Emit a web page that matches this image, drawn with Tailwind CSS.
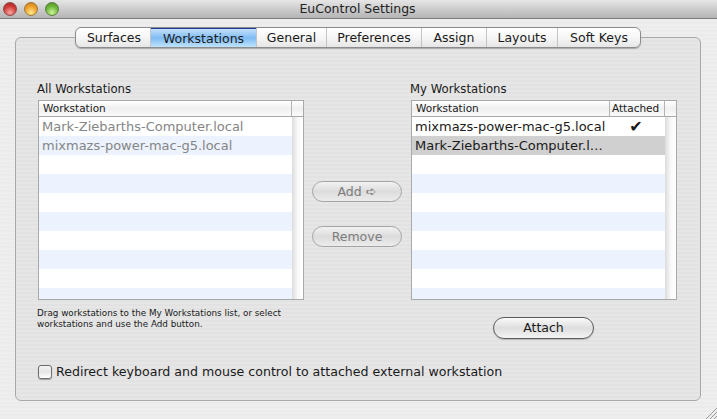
<!DOCTYPE html>
<html lang="en">
<head>
  <meta charset="UTF-8" />
  <title>EuControl Settings</title>
  <script src="https://cdn.jsdelivr.net/npm/@tailwindcss/browser@4"></script>
</head>
<body class="w-[717px] h-[419px] overflow-hidden font-['DejaVu_Sans',sans-serif] text-[#1a1a1a] bg-[repeating-linear-gradient(180deg,#eeeeee_0px,#eeeeee_2px,#ebebeb_2px,#ebebeb_4px)]">
  <!-- title bar -->
  <header class="relative h-[19px] flex items-center justify-center border-b border-[#7d7d7d] bg-gradient-to-b from-[#e6e6e6] to-[#b4b4b4]">
    <div class="absolute left-[3px] top-[2px] flex gap-[7px]">
      <span class="w-[14px] h-[14px] rounded-full border border-[#8c4a4a] bg-[radial-gradient(circle_at_50%_80%,#f9a8a0,#d03c38_55%,#a02424)]"></span>
      <span class="w-[14px] h-[14px] rounded-full border border-[#9a7a3a] bg-[radial-gradient(circle_at_50%_80%,#fde88e,#eea02c_55%,#c07c18)]"></span>
      <span class="w-[14px] h-[14px] rounded-full border border-[#5c8044] bg-[radial-gradient(circle_at_50%_80%,#cdf39a,#6cb838_55%,#4c8c24)]"></span>
    </div>
    <h1 class="text-[12.5px] leading-none text-[#222] -ml-[2px]">EuControl Settings</h1>
  </header>

  <!-- tab panel -->
  <main class="mx-[15px] mt-[18px] w-[686px] h-[364px] border border-[#a8a8a8] rounded-[6px] bg-[repeating-linear-gradient(180deg,#e6e6e6_0px,#e6e6e6_2px,#e2e2e2_2px,#e2e2e2_4px)] px-[22px]">
    <nav class="-mt-[11px] ml-[37px] w-[566px] h-[21px] flex text-[12.5px] leading-[19px] text-center border border-[#8c8c8c] rounded-[6px] overflow-hidden bg-gradient-to-b from-white via-[#f6f6f6] to-[#e6e6e6] shadow-[0_1px_1px_rgba(0,0,0,0.25)]">
      <a class="w-[75px] pl-[2px] border-r border-[#c4c4c4]">Surfaces</a>
      <a class="w-[105px] border-t border-[#1c3f94] bg-gradient-to-b from-[#c4e0fb] via-[#7fbcf4] to-[#bfe3fd]">Workstations</a>
      <a class="w-[71px] border-x border-[#c4c4c4]">General</a>
      <a class="w-[95px] border-r border-[#c4c4c4]">Preferences</a>
      <a class="w-[65px] border-r border-[#c4c4c4]">Assign</a>
      <a class="w-[71px] border-r border-[#c4c4c4]">Layouts</a>
      <a class="flex-1">Soft Keys</a>
    </nav>

    <div class="flex mt-[33px]">
      <!-- all workstations -->
      <section class="w-[266px]">
        <h2 class="text-[11.7px] leading-[16px] mb-[3px] -ml-[1px]">All Workstations</h2>
        <div class="h-[200px] border border-[#a9a9a9] bg-white overflow-hidden">
          <div class="h-[16px] flex text-[10.5px] leading-[15px] border-b border-[#a9a9a9] bg-gradient-to-b from-white via-[#f0f0f0] to-[#fafafa]">
            <div class="w-[253px] px-[4px] border-r border-[#b4b4b4]">Workstation</div>
            <div class="flex-1"></div>
          </div>
          <div class="flex h-[183px]">
            <ul class="w-[253px] text-[13px] leading-[19px] text-[#858585]">
              <li class="h-[19px] px-[3px]">Mark-Ziebarths-Computer.local</li>
              <li class="h-[19px] px-[3px] bg-[#edf3fe]">mixmazs-power-mac-g5.local</li>
              <li class="h-[19px]"></li>
              <li class="h-[19px] bg-[#edf3fe]"></li>
              <li class="h-[19px]"></li>
              <li class="h-[19px] bg-[#edf3fe]"></li>
              <li class="h-[19px]"></li>
              <li class="h-[19px] bg-[#edf3fe]"></li>
              <li class="h-[19px]"></li>
              <li class="h-[19px] bg-[#edf3fe]"></li>
            </ul>
            <div class="flex-1 bg-gradient-to-r from-[#dcdcdc] via-[#f8f8f8] to-[#ffffff]"></div>
          </div>
        </div>
        <p class="mt-[8px] -ml-[1px] text-[8.8px] leading-[11px]">Drag workstations to the My Workstations list, or select<br />workstations and use the Add button.</p>
      </section>

      <!-- add / remove -->
      <div class="w-[107px] pl-[8px] pt-[100px] flex flex-col gap-[24px] text-[12.5px] text-[#7c7c7c]">
        <button class="w-[90px] h-[21px] leading-[18px] rounded-full border border-[#a4a4a4] bg-gradient-to-b from-[#f2f2f2] via-[#dcdcdc] to-[#ececec]">Add <span class="text-[13px]">➪</span></button>
        <button class="w-[90px] h-[21px] leading-[18px] rounded-full border border-[#a4a4a4] bg-gradient-to-b from-[#f2f2f2] via-[#dcdcdc] to-[#ececec]">Remove</button>
      </div>

      <!-- my workstations -->
      <section class="w-[266px]">
        <h2 class="text-[11.7px] leading-[16px] mb-[3px] -ml-[1px]">My Workstations</h2>
        <div class="h-[200px] border border-[#a9a9a9] bg-white overflow-hidden">
          <div class="h-[16px] flex text-[10.5px] leading-[15px] border-b border-[#a9a9a9] bg-gradient-to-b from-white via-[#f0f0f0] to-[#fafafa]">
            <div class="w-[198px] px-[4px] border-r border-[#b4b4b4]">Workstation</div>
            <div class="w-[55px] pl-[2px] border-r border-[#b4b4b4]">Attached</div>
            <div class="flex-1"></div>
          </div>
          <div class="flex h-[183px]">
            <ul class="w-[253px] text-[13px] leading-[19px]">
              <li class="h-[19px] pl-[3px] flex">
                <span class="w-[198px]">mixmazs-power-mac-g5.local</span>
                <span class="w-[46px] text-center text-[16px] leading-[19px]">✔</span>
              </li>
              <li class="h-[19px] px-[3px] bg-[#d0d0d0]">Mark-Ziebarths-Computer.l…</li>
              <li class="h-[19px]"></li>
              <li class="h-[19px] bg-[#edf3fe]"></li>
              <li class="h-[19px]"></li>
              <li class="h-[19px] bg-[#edf3fe]"></li>
              <li class="h-[19px]"></li>
              <li class="h-[19px] bg-[#edf3fe]"></li>
              <li class="h-[19px]"></li>
              <li class="h-[19px] bg-[#edf3fe]"></li>
            </ul>
            <div class="flex-1 bg-gradient-to-r from-[#dcdcdc] via-[#f8f8f8] to-[#ffffff]"></div>
          </div>
        </div>
        <button class="block mt-[17px] ml-[82px] w-[101px] h-[22px] text-[12.5px] leading-[18px] rounded-full border border-[#5c5c5c] bg-gradient-to-b from-[#fafafa] via-[#dedede] to-[#f4f4f4] shadow-[0_1px_1px_rgba(0,0,0,0.2)]">Attach</button>
      </section>
    </div>

    <label class="mt-[25px] flex items-center gap-[4px] text-[12.6px] leading-[16px]">
      <span class="w-[14px] h-[14px] rounded-[3px] border border-[#6e6e6e] bg-gradient-to-b from-[#f4f4f4] via-[#e6e6e6] to-white shadow-[0_1px_1px_rgba(0,0,0,0.3)]"></span>
      Redirect keyboard and mouse control to attached external workstation
    </label>
  </main>

  <!-- resize grip -->
  <svg class="fixed right-0 bottom-0 w-[14px] h-[14px]" viewBox="0 0 14 14" fill="none" stroke="#9a9a9a">
    <path d="M14 3 3 14M14 7 7 14M14 11 11 14" />
  </svg>
</body>
</html>
